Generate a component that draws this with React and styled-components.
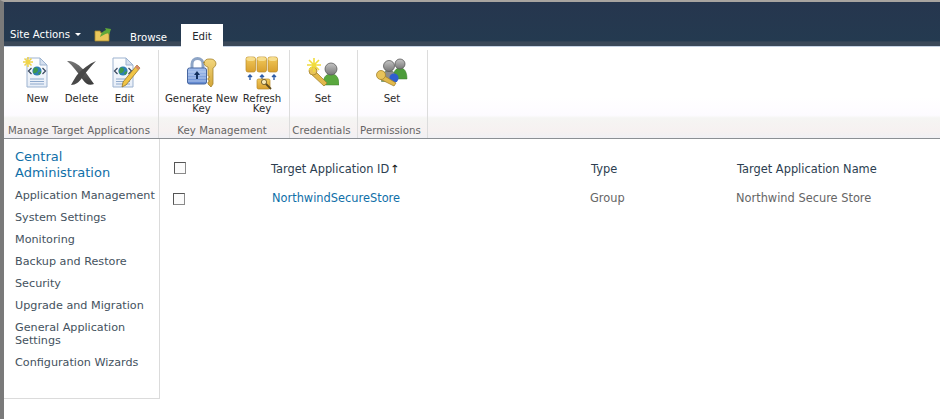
import React from "react";
import styled, { createGlobalStyle } from "styled-components";

const Global = createGlobalStyle`
  html, body { margin: 0; padding: 0; background: #fff; }
  body { font-family: Tahoma, "DejaVu Sans", Verdana, sans-serif; }
`;

const Page = styled.div`
  width: 940px;
  height: 419px;
  overflow: hidden;
  background: #fff;
  border-left: 4px solid #7a7a7a;
  border-top: 2px solid #a8a4a0;
  box-sizing: border-box;
  display: flex;
  flex-direction: column;
`;
const TopBar = styled.div`
  height: 45px;
  box-sizing: border-box;
  background: linear-gradient(#26364e 0, #243a50 88%, #3a4859 91%, #3a4859 100%);
  border-bottom: 1px solid #c5d2e4;
  display: flex;
  align-items: flex-end;
  flex: none;
`;
const SiteActions = styled.div`
  color: #fff;
  font-size: 10.2px;
  width: 90px;
  padding-left: 6px;
  height: 24px;
  display: flex;
  align-items: center;
  box-sizing: border-box;
  gap: 5px;
`;
const Caret = styled.span`
  border: 3px solid transparent;
  border-top-color: #fff;
  margin-top: 3px;
`;
const FolderWrap = styled.div`
  width: 28px;
  height: 24px;
  display: flex;
  align-items: center;
`;
const Tab = styled.div`
  font-size: 10.2px;
  height: 23px;
  width: ${p => p.$w}px;
  margin-right: ${p => p.$gap || 0}px;
  margin-bottom: -1px;
  padding-top: ${p => (p.$active ? 2 : 3)}px;
  box-sizing: border-box;
  display: flex;
  align-items: center;
  justify-content: center;
  color: ${p => (p.$active ? "#23272c" : "#fff")};
  background: ${p => (p.$active ? "#fff" : "transparent")};
`;
const Ribbon = styled.div`
  height: 92px;
  flex: none;
  display: flex;
  box-sizing: border-box;
  border-bottom: 1px solid #8b8f94;
  background: linear-gradient(#fff 0, #fff 55%, #fdfbff 75%, #f5f5f3 78%, #f6f1f1 92%, #f0f0f4 100%);
`;
const Group = styled.div`
  width: ${p => p.$w}px;
  flex: none;
  display: flex;
  flex-direction: column;
  border-right: 1px solid #dcdcdc;
  margin-top: 3px;
  padding-right: 4px;
  box-sizing: border-box;
`;
const Buttons = styled.div`
  flex: 1;
  display: flex;
  padding-left: ${p => p.$pad || 0}px;
`;
const RibbonButton = styled.div`
  width: ${p => p.$w}px;
  flex: none;
  display: flex;
  flex-direction: column;
  align-items: center;
  padding-top: 4px;
`;
const ButtonText = styled.span`
  color: #2b2b2b;
  font-size: 10.2px;
  line-height: 10px;
  text-align: center;
  white-space: pre;
`;
const IconBox = styled.div`
  height: 36px;
  margin-bottom: 4px;
  display: flex;
  align-items: center;
  justify-content: center;
`;
const GroupLabel = styled.div`
  font-size: 10.2px;
  letter-spacing: 0.05px;
  color: #656565;
  text-align: center;
  height: 15px;
  line-height: 15px;
  white-space: nowrap;
`;
const Body = styled.div`
  display: flex;
  flex: 1;
  align-items: flex-start;
`;
const Nav = styled.nav`
  width: 156px;
  height: 260px;
  flex: none;
  box-sizing: border-box;
  border-right: 1px solid #dbdbdb;
  border-bottom: 1px solid #dbdbdb;
  padding: 10px 0 0 11px;
`;
const NavTitle = styled.div`
  color: #0f6fa8;
  font-size: 13px;
  line-height: 16px;
  margin-bottom: 8px;
  width: 130px;
`;
const NavItem = styled.div`
  color: #44525e;
  font-size: 11.2px;
  line-height: 13px;
  margin-bottom: 9px;
  white-space: pre;
`;
const Content = styled.div`
  flex: 1;
  padding-top: 23px;
`;
const Row = styled.div`
  display: grid;
  grid-template-columns: ${p => p.$cols};
  height: 29px;
  align-items: start;
  font-size: 11.4px;
  line-height: 14px;
  color: ${p => (p.$head ? "#2c3e50" : "#666")};
`;
const Box = styled.span`
  display: block;
  width: 10px;
  height: 10px;
  margin: ${p => p.$y}px 0 0 ${p => p.$x}px;
  border: 1px solid #8a8a8a;
  border-top-color: #555;
  border-left-color: #555;
  background: #fbfbfb;
`;
const AppLink = styled.span`
  color: #0f6fa8;
`;
const SortArrow = styled.span`
  color: #111;
  margin-left: 1px;
`;

const Folder = () => (
  <svg width="18" height="16" viewBox="0 0 18 16">
    <path d="M1 5h5l1 2h8v8H1z" fill="#e9c75c" stroke="#a98a2c" strokeWidth=".8" />
    <path d="M6 11c1-4 3-6 6-7l-1-2 6 1-2 6-1-2c-3 1-5 2-8 4z" fill="#5fa83a" />
  </svg>
);

const Grad = ({ id, a, b }) => (
  <linearGradient id={id} x1="0" y1="0" x2="0" y2="1">
    <stop offset="0" stopColor={a} />
    <stop offset="1" stopColor={b} />
  </linearGradient>
);

const Doc = () => (
  <>
    <Grad id="docFill" a="#ffffff" b="#e6edf7" />
    <path d="M4 2h13l7 7v22H4z" fill="url(#docFill)" stroke="#9db3d0" />
    <path d="M17 2v7h7z" fill="#d5e0ef" stroke="#9db3d0" />
    <path d="M7 23h14M7 25.5h14M7 28h14" stroke="#8ea9cc" />
    <circle cx="14" cy="15" r="4.6" fill="#2f7fb5" />
    <path d="M11 12c2-1 4 0 4 2s-3 4-5 3zM15 17l3-2 0 2-2 2z" fill="#3f9a4a" />
    <path d="M8.5 12l-3 3 3 3M19.5 12l3 3-3 3" fill="none" stroke="#3d4c63" strokeWidth="1.3" />
  </>
);

const NewIcon = () => (
  <svg width="30" height="32" viewBox="0 0 30 32">
    <Doc />
    <path d="M5 1v10M0 6h10M1.5 2.5l7 7M8.5 2.5l-7 7" stroke="#f0d44a" strokeWidth="1.5" />
  </svg>
);
const DeleteIcon = () => (
  <svg width="30" height="28" viewBox="0 0 30 28">
    <Grad id="delA" a="#777" b="#3a3a3a" />
    <path d="M0 3c7-1 13 5 17 9l10 14c-5 2-8 0-11-4C11 15 6 8 0 3z" fill="url(#delA)" />
    <path d="M29 3c-7 3-14 8-19 14-2 3-4 6-6 10 5 0 8-3 11-7 4-6 9-12 14-17z" fill="#484848" />
  </svg>
);
const EditIcon = () => (
  <svg width="32" height="32" viewBox="0 0 32 32">
    <Doc />
    <path d="M31 12L17 29l-4 2 1-5L28 9z" fill="#f0c445" stroke="#8a6a20" strokeWidth=".7" />
    <path d="M31 12l-3-3-2 2 3 3z" fill="#d88a6a" />
  </svg>
);
const LockKey = () => (
  <svg width="32" height="32" viewBox="0 0 32 32">
    <Grad id="lockBody" a="#a9c3ef" b="#5f86cf" />
    <Grad id="gold" a="#f3d77e" b="#d3a537" />
    <path d="M6 13V8a5.5 5.5 0 0 1 11 0v5" fill="none" stroke="#8ea5c6" strokeWidth="3" />
    <rect x="1.5" y="12" width="19" height="16" rx="2" fill="url(#lockBody)" stroke="#47669f" />
    <path d="M2 16h18M2 19h18M2 22h18M2 25h18" stroke="#c4d6f4" strokeWidth=".8" />
    <path d="M11 15l3 4h-2v4h-2v-4H8z" fill="#12305f" />
    <path d="M18 7a5 5 0 0 1 5-4h2a5 5 0 0 1 5 5 5 5 0 0 1-3 4v16l-2 3-3-3v-2l2-1-2-1v-2l2-1-2-1v-9a5 5 0 0 1-4-5z" fill="url(#gold)" stroke="#a5842f" strokeWidth=".8" />
  </svg>
);
const Can = ({ x }) => (
  <>
    <rect x={x} y="3" width="9.5" height="15" rx="2" fill="url(#canFill)" stroke="#b98a25" strokeWidth=".7" />
    <ellipse cx={x + 4.75} cy="5" rx="4.5" ry="2" fill="#f6dd8d" />
  </>
);
const RefreshIcon = () => (
  <svg width="34" height="36" viewBox="0 0 34 36">
    <Grad id="canFill" a="#f1c95a" b="#d9a02f" />
    <Can x={1} />
    <Can x={12} />
    <Can x={23} />
    <path d="M5 26v-5M3 23l2-2 2 2M17 26v-5M15 23l2-2 2 2M29 26v-5M27 23l2-2 2 2" stroke="#2f5da8" strokeWidth="1.4" fill="none" />
    <rect x="12" y="25" width="13" height="10" rx="1.5" fill="url(#canFill)" stroke="#b98a25" strokeWidth=".7" />
    <path d="M20 29l6 6" stroke="#5e4a1d" strokeWidth="1.8" />
    <circle cx="19" cy="28" r="2.6" fill="#f7e9b5" stroke="#5e4a1d" strokeWidth=".8" />
  </svg>
);
// head and shoulders, the body starts just under the head
const Person = ({ x, y, r, body, head }) => (
  <>
    <path d={`M${x - r - 2} ${y + r + 10}c0-8 3-11 ${r + 2}-11s${r + 2} 3 ${r + 2} 11z`} fill={body} stroke="#3c7d2e" strokeWidth=".5" />
    <circle cx={x} cy={y} r={r} fill={head} stroke="#5b5b5b" strokeWidth=".8" />
  </>
);
const SetCredIcon = () => (
  <svg width="32" height="32" viewBox="0 0 32 32">
    <Grad id="head" a="#c4c4c4" b="#777" />
    <Person x={24} y={13} r={6} body="#5aa83e" head="url(#head)" />
    <path d="M7 14l13 13-3 3L3 17z" fill="#e2b94b" stroke="#a5842f" strokeWidth=".8" />
    <circle cx="6" cy="15" r="4" fill="#e8c35a" stroke="#a5842f" strokeWidth=".8" />
    <path d="M7 2v14M0 9h14M2 4l10 10M12 4L2 14" stroke="#f1dc3c" strokeWidth="1.6" />
  </svg>
);
const SetPermIcon = () => (
  <svg width="32" height="32" viewBox="0 0 32 32">
    <Grad id="head2" a="#c4c4c4" b="#777" />
    <Person x={24} y={8} r={5} body="#4c9c3a" head="url(#head2)" />
    <Person x={13} y={10} r={5.5} body="#8c8c8c" head="url(#head2)" />
    <circle cx="18" cy="22" r="4.6" fill="#2f5fcf" />
    <path d="M7 19l13 8-2 3L4 23z" fill="#e2b94b" stroke="#a5842f" strokeWidth=".8" />
    <circle cx="5" cy="19" r="4.5" fill="#e8c35a" stroke="#a5842f" strokeWidth=".8" />
  </svg>
);

const navItems = [
  "Application Management",
  "System Settings",
  "Monitoring",
  "Backup and Restore",
  "Security",
  "Upgrade and Migration",
  "General Application\nSettings",
  "Configuration Wizards",
];

const groups = [
  {
    label: "Manage Target Applications", w: 155, pad: 11,
    buttons: [
      { text: "New", w: 45, icon: <NewIcon /> },
      { text: "Delete", w: 43, icon: <DeleteIcon /> },
      { text: "Edit", w: 43, icon: <EditIcon /> },
    ],
  },
  {
    label: "Key Management", w: 131, pad: 5,
    buttons: [
      { text: "Generate New\nKey", w: 75, icon: <LockKey /> },
      { text: "Refresh\nKey", w: 46, icon: <RefreshIcon /> },
    ],
  },
  { label: "Credentials", w: 68, pad: 0, buttons: [{ text: "Set", w: 66, icon: <SetCredIcon /> }] },
  { label: "Permissions", w: 70, pad: 0, buttons: [{ text: "Set", w: 68, icon: <SetPermIcon /> }] },
];

export default function App() {
  return (
    <Page>
      <Global />
      <TopBar>
        <SiteActions>Site Actions <Caret /></SiteActions>
        <FolderWrap><Folder /></FolderWrap>
        <Tab $w={53} $gap={6}>Browse</Tab>
        <Tab $w={42} $active>Edit</Tab>
      </TopBar>
      <Ribbon>
        {groups.map(g => (
          <Group key={g.label} $w={g.w}>
            <Buttons $pad={g.pad}>
              {g.buttons.map(b => (
                <RibbonButton key={b.text} $w={b.w}>
                  <IconBox>{b.icon}</IconBox>
                  <ButtonText>{b.text}</ButtonText>
                </RibbonButton>
              ))}
            </Buttons>
            <GroupLabel>{g.label}</GroupLabel>
          </Group>
        ))}
      </Ribbon>
      <Body>
        <Nav>
          <NavTitle>Central Administration</NavTitle>
          {navItems.map(n => <NavItem key={n}>{n}</NavItem>)}
        </Nav>
        <Content>
          <Row $head $cols="111px 320px 146px 1fr">
            <Box $x={14} $y={0} />
            <span>Target Application ID<SortArrow>↑</SortArrow></span>
            <span>Type</span>
            <span>Target Application Name</span>
          </Row>
          <Row $cols="112px 318px 146px 1fr">
            <Box $x={13} $y={2} />
            <AppLink>NorthwindSecureStore</AppLink>
            <span>Group</span>
            <span>Northwind Secure Store</span>
          </Row>
        </Content>
      </Body>
    </Page>
  );
}
